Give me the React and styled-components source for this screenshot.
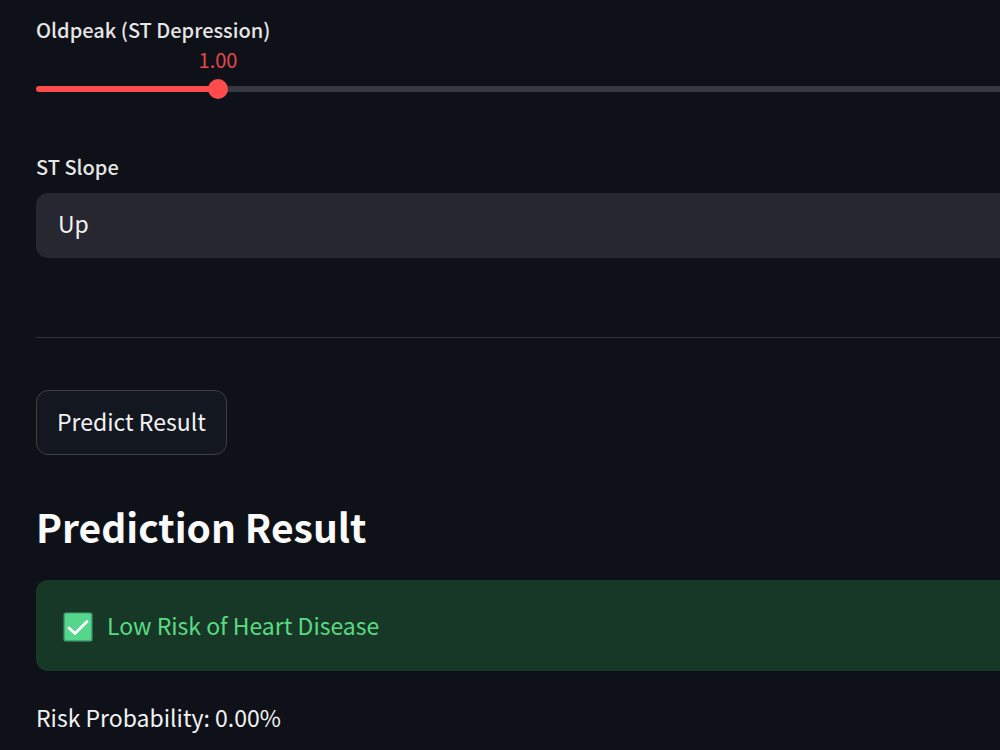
import React, { useState } from 'react';
import styled, { createGlobalStyle } from 'styled-components';

const GlobalStyle = createGlobalStyle`
  *, *::before, *::after {
    box-sizing: border-box;
  }

  body {
    margin: 0;
    background-color: #0e1117;
    color: #f2f2f3;
    font-family: 'Noto Sans CJK SC', 'Noto Sans', sans-serif;
    overflow-x: hidden;
  }
`;

const Page = styled.main`
  padding: 16px 0 16px 36px;
  overflow: hidden;
`;

/* the form runs past the right edge of the window */
const Content = styled.div`
  display: flex;
  flex-direction: column;
  width: calc(100% + 88px);
`;

const Field = styled.div`
  display: flex;
  flex-direction: column;
  margin-bottom: ${props => props.$gap};
`;

const Label = styled.label`
  color: #e6e6e7;
  font-size: 20px;
  font-weight: 500;
  line-height: 28px;
`;

const SliderBox = styled.div`
  position: relative;
  padding-top: 32px;
`;

const SliderValue = styled.output`
  position: absolute;
  top: 2px;
  transform: translateX(-50%);
  color: #e8474a;
  font-size: 20px;
  line-height: 28px;
`;

const Slider = styled.input`
  appearance: none;
  display: block;
  width: 100%;
  height: 26px;
  margin: 0;
  background: transparent;
  cursor: pointer;

  &::-webkit-slider-runnable-track {
    height: 6px;
    border-radius: 4px;
    background: linear-gradient(
      to right,
      #ff4b4b var(--fill),
      #363940 var(--fill)
    );
  }

  &::-webkit-slider-thumb {
    appearance: none;
    width: 20px;
    height: 20px;
    margin-top: -7px;
    border-radius: 50%;
    background-color: #ff4b4b;
  }
`;

const Select = styled.select`
  appearance: none;
  height: 65px;
  margin-top: 12px;
  padding: 0 22px 6px;
  border: none;
  border-radius: 12px;
  background-color: #262730;
  color: inherit;
  font-family: inherit;
  font-size: 23px;
`;

const Divider = styled.hr`
  width: 100%;
  height: 1px;
  margin: 0 0 52px;
  border: none;
  background-color: #31333b;
`;

const PredictButton = styled.button`
  align-self: flex-start;
  height: 65px;
  padding: 0 20px 4px;
  border: 1px solid #3d4047;
  border-radius: 12px;
  background-color: #131720;
  color: inherit;
  font-family: inherit;
  font-size: 23px;
  cursor: pointer;
`;

const Heading = styled.h2`
  margin: 43px 0 26px;
  color: #fafafa;
  font-size: 39px;
  font-weight: 700;
  line-height: 56px;
`;

const Alert = styled.div`
  display: flex;
  align-items: center;
  gap: 14px;
  height: 91px;
  padding: 0 27px;
  border-radius: 12px;
  background-color: #183827;
  color: #5ada83;
  font-size: 23px;
  line-height: 36px;
`;

const AlertText = styled.span`
  padding-bottom: 2px;
`;

const Probability = styled.p`
  margin: 28px 0 0;
  font-size: 23px;
  line-height: 36px;
`;

const CheckIcon = () => (
  <svg width="30" height="32" viewBox="0 -2 30 32" aria-hidden="true">
    <rect x="0.5" y="0.5" width="29" height="29" rx="2.5" fill="#43a674" />
    <rect x="2" y="1.5" width="26" height="26.5" rx="2" fill="#55d68d" />
    <path
      d="M6 16 L12 21.5 L24 9.5"
      fill="none"
      stroke="#fff"
      strokeWidth="2.8"
      strokeLinecap="round"
      strokeLinejoin="round"
    />
  </svg>
);

const MAX_OLDPEAK = 6;

const App = () => {
  const [oldpeak, setOldpeak] = useState(1);
  const [slope, setSlope] = useState('Up');

  const ratio = oldpeak / MAX_OLDPEAK;
  const thumbX = `calc(10px + (100% - 20px) * ${ratio})`;

  return (
    <Page>
      <GlobalStyle />
      <Content>
        <Field $gap="51px">
          <Label htmlFor="oldpeak">Oldpeak (ST Depression)</Label>
          <SliderBox>
            <SliderValue htmlFor="oldpeak" style={{ left: thumbX }}>
              {oldpeak.toFixed(2)}
            </SliderValue>
            <Slider
              id="oldpeak"
              type="range"
              min="0"
              max={MAX_OLDPEAK}
              step="0.1"
              value={oldpeak}
              onChange={(e) => setOldpeak(Number(e.target.value))}
              style={{ '--fill': thumbX }}
            />
          </SliderBox>
        </Field>

        <Field $gap="79px">
          <Label htmlFor="slope">ST Slope</Label>
          <Select id="slope" value={slope} onChange={(e) => setSlope(e.target.value)}>
            <option value="Up">Up</option>
            <option value="Flat">Flat</option>
            <option value="Down">Down</option>
          </Select>
        </Field>

        <Divider />

        <PredictButton type="button">Predict Result</PredictButton>

        <Heading>Prediction Result</Heading>
        <Alert role="status">
          <CheckIcon />
          <AlertText>Low Risk of Heart Disease</AlertText>
        </Alert>
        <Probability>Risk Probability: 0.00%</Probability>
      </Content>
    </Page>
  );
};

export default App;
